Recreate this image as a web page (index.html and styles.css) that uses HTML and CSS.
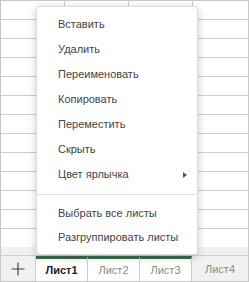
FILE: index.html
```html
<!DOCTYPE html>
<html lang="ru">
<head>
    <meta charset="UTF-8">
    <title>Листы</title>
    <link rel="stylesheet" href="styles.css">
</head>
<body>
    <div class="workbook">
        <div class="cells"></div>
        <div class="scroll-strip"></div>
        <div class="tab-bar">
            <button class="add-sheet">
                <svg width="14" height="14" viewBox="0 0 14 14"><path d="M7 0.5V13.5M0.5 7H13.5" stroke="#444" stroke-width="1.2"/></svg>
            </button>
            <div class="tab grouped active">Лист1</div>
            <div class="tab grouped">Лист2</div>
            <div class="tab grouped">Лист3</div>
            <div class="tab">Лист4</div>
        </div>

        <ul class="context-menu">
            <li>Вставить</li>
            <li>Удалить</li>
            <li>Переименовать</li>
            <li>Копировать</li>
            <li>Переместить</li>
            <li>Скрыть</li>
            <li class="has-sub">Цвет ярлычка</li>
            <li class="divider"></li>
            <li class="group-item">Выбрать все листы</li>
            <li class="group-item">Разгруппировать листы</li>
        </ul>
    </div>
</body>
</html>
```

FILE: styles.css
```css
body {
    margin: 0;
    font-family: "Liberation Sans", Arial, sans-serif;
    background-color: #ffffff;
}

.workbook {
    position: relative;
    width: 249px;
    height: 282px;
    box-sizing: border-box;
    border: 1px solid #c8c8c8;
    display: flex;
    flex-direction: column;
    overflow: hidden;
}

/* grid lines drawn as backgrounds */
.cells {
    height: 246px;
    background-color: #ffffff;
    background-image:
        repeating-linear-gradient(to right, transparent 0, transparent 63px, #cfcfcf 63px, #cfcfcf 64px),
        repeating-linear-gradient(to bottom, transparent 0, transparent 18px, #cfcfcf 18px, #cfcfcf 19px);
    background-position: 0 0;
}

.scroll-strip {
    height: 8px;
    background-color: #f1f1f1;
    border-bottom: 1px solid #cfcfcf;
}

.tab-bar {
    flex: 1;
    display: flex;
    background-color: #f1f1f1;
}

.add-sheet {
    width: 35px;
    border: none;
    border-right: 1px solid #cfcfcf;
    background-color: #f1f1f1;
    padding: 0;
    display: flex;
    align-items: center;
    justify-content: center;
}

.tab {
    width: 52px;
    border-right: 1px solid #cfcfcf;
    display: flex;
    align-items: center;
    justify-content: center;
    font-size: 11px;
    color: #8a8a8a;
    box-sizing: border-box;
    padding-top: 1px;
}

.tab.grouped {
    background-color: #ffffff;
    border-top: 3px solid #3d6b4f;
    padding-top: 0;
}

.tab.active {
    color: #222;
    font-weight: bold;
}

.tab:last-child {
    flex: 1;
    border-right: none;
}

.context-menu {
    position: absolute;
    top: 5px;
    left: 35px;
    width: 160px;
    margin: 0;
    padding: 5px 0;
    list-style: none;
    background-color: #ffffff;
    border: 1px solid #dcdcdc;
    border-radius: 4px;
    box-shadow: 0 2px 10px rgba(0, 0, 0, 0.2);
    font-size: 11px;
    color: #444;
}

.context-menu li {
    position: relative;
    height: 25px;
    line-height: 25px;
    padding-left: 21px;
}

.context-menu .group-item {
    height: 24px;
    line-height: 24px;
}

.context-menu .has-sub::after {
    content: "";
    position: absolute;
    right: 10px;
    top: 10px;
    border-left: 4px solid #555;
    border-top: 3px solid transparent;
    border-bottom: 3px solid transparent;
}

.context-menu .divider {
    height: 1px;
    padding: 0;
    margin: 7px 0 6px;
    background-color: #e2e2e2;
}
```
